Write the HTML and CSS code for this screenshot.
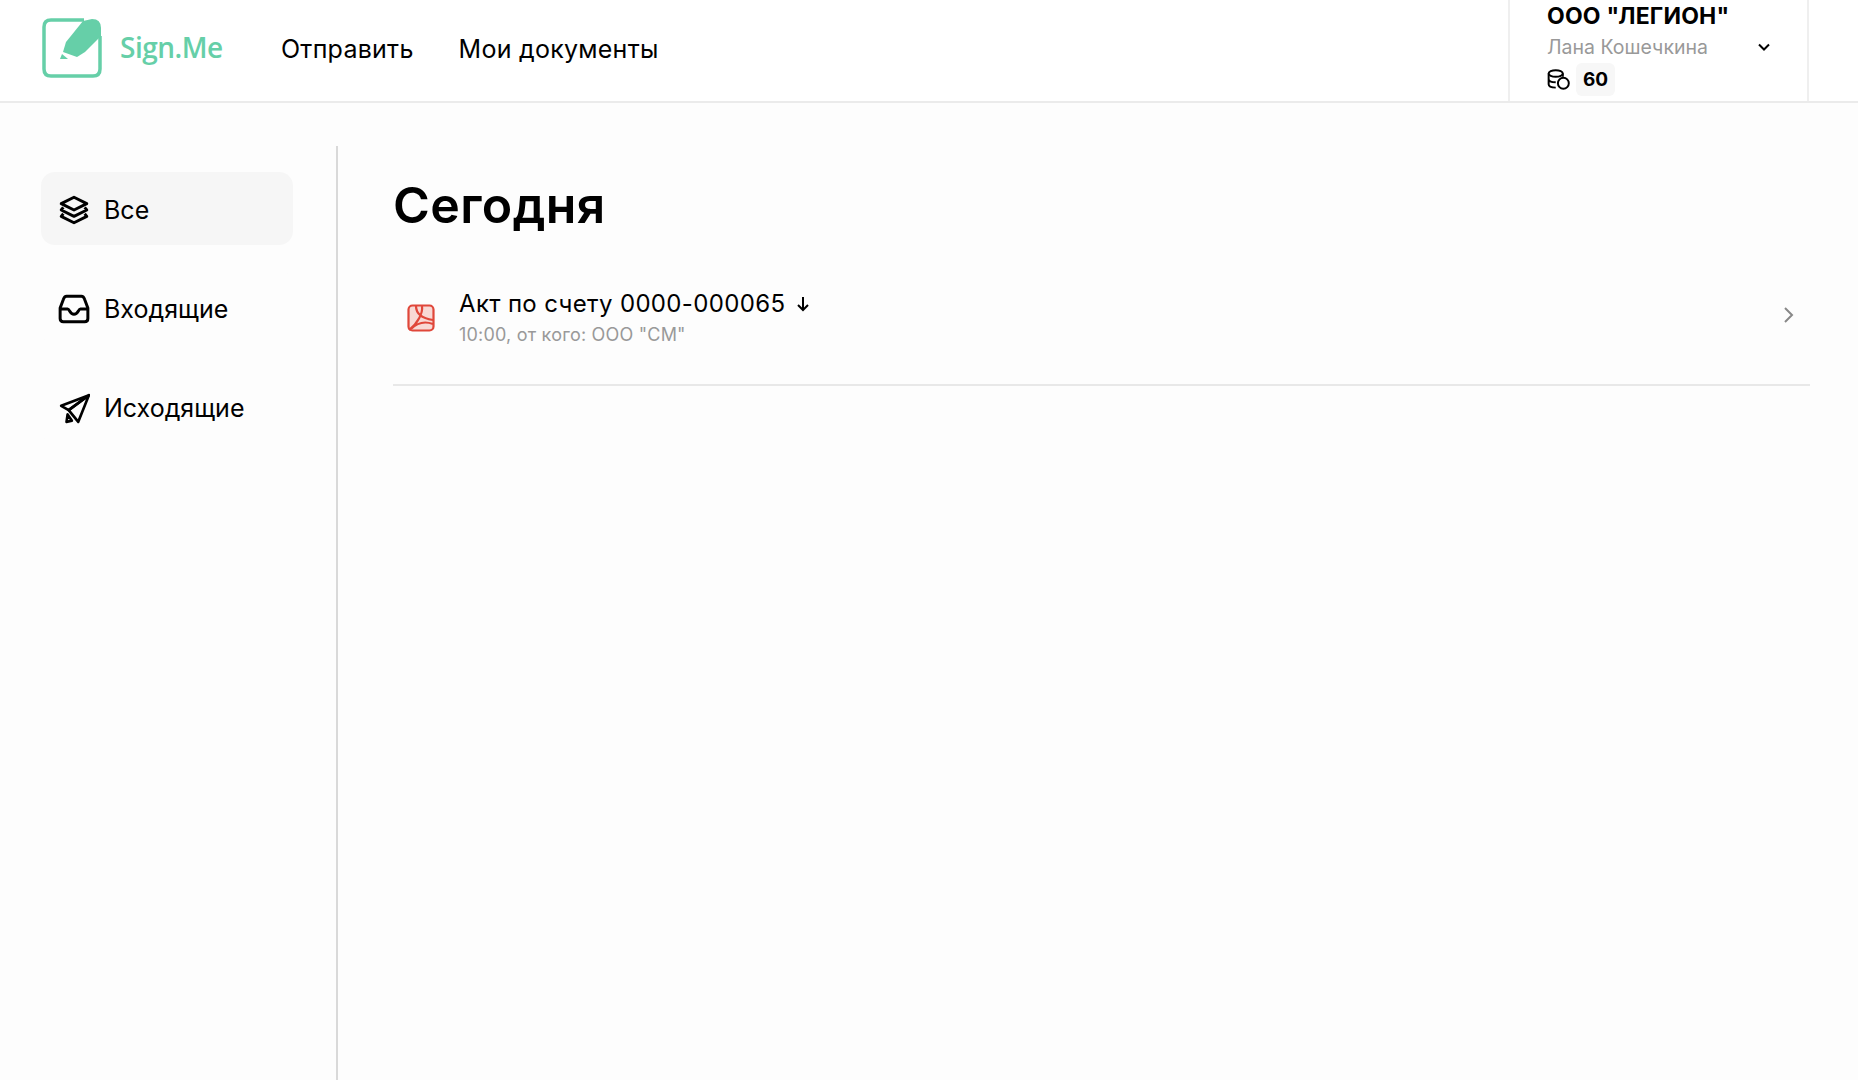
FILE: index.html
```html
<!DOCTYPE html>
<html lang="ru">
<head>
    <meta charset="UTF-8">
    <title>Sign.Me</title>
    <link rel="stylesheet" href="styles.css">
</head>
<body>
    <header class="header">
        <div class="logo">
            <svg class="logo-icon" width="60" height="60" viewBox="0 0 60 60">
                <path d="M42 2H9Q2 2 2 9V51Q2 58 9 58H51Q58 58 58 51V18" fill="none" stroke="#66cfa8" stroke-width="3.5"/>
                <path d="M41 3L50 1Q59 1 59 10V18L43 34L35 39L21 34L24 24Z" fill="#66cfa8"/>
                <path d="M20 36L26 41L18 41Z" fill="#66cfa8"/>
            </svg>
            <span class="logo-text">Sign.Me</span>
        </div>
        <nav class="nav">
            <a>Отправить</a>
            <a>Мои документы</a>
        </nav>
        <div class="account">
            <div class="company">ООО "ЛЕГИОН"</div>
            <div class="person">
                <span>Лана Кошечкина</span>
                <svg width="14" height="10" viewBox="0 0 14 10"><path d="M2 2.5L7 7.5L12 2.5" fill="none" stroke="#000" stroke-width="2"/></svg>
            </div>
            <div class="balance">
                <svg width="24" height="22" viewBox="0 0 22 20" fill="none" stroke="#000" stroke-width="1.8">
                    <ellipse cx="8" cy="4" rx="6.5" ry="3"/>
                    <path d="M1.5 4V14Q1.5 17 8 17M1.5 9Q1.5 12 8 12M14.5 4V7"/>
                    <circle cx="15" cy="13" r="5"/>
                </svg>
                <span class="coins">60</span>
            </div>
        </div>
    </header>

    <div class="page">
        <aside class="sidebar">
            <a class="side-item active">
                <svg width="32" height="32" viewBox="0 0 30 30" fill="none" stroke="#000" stroke-width="2.7" stroke-linejoin="round">
                    <path d="M15 3L27 9L15 15L3 9Z"/>
                    <path d="M5 12.5L3 15L15 21L27 15L25 12.5"/>
                    <path d="M5 18.5L3 21L15 27L27 21L25 18.5"/>
                </svg>
                Все
            </a>
            <a class="side-item">
                <svg width="32" height="32" viewBox="0 0 30 30" fill="none" stroke="#000" stroke-width="2.8" stroke-linejoin="round">
                    <path d="M8 3H22Q24 3 25 6L28 14V24Q28 27 25 27H5Q2 27 2 24V14L5 6Q6 3 8 3Z"/>
                    <path d="M2 15H9C11 15 11 20 15 20S19 15 21 15H28"/>
                </svg>
                Входящие
            </a>
            <a class="side-item">
                <svg width="32" height="32" viewBox="0 0 30 30" fill="none" stroke="#000" stroke-width="2.5" stroke-linejoin="round">
                    <path d="M29 3L3 13L10 17Z"/>
                    <path d="M29 3L10 17L19 28Z"/>
                    <path d="M9 21L8 28L13 27Z"/>
                </svg>
                Исходящие
            </a>
        </aside>

        <main class="content">
            <h1>Сегодня</h1>
            <div class="doc">
                <svg class="doc-icon" width="28" height="28" viewBox="0 0 28 28" fill="#f8d9d5" stroke="#e0473a" stroke-width="2.2">
                    <rect x="1.5" y="1.5" width="25" height="25" rx="4"/>
                    <path d="M9 2C9 9 13 14 26 16M15 2C16 9 11 19 2 26M4 25C10 19 18 17 26 20" fill="none"/>
                </svg>
                <div class="doc-info">
                    <div class="doc-title">
                        Акт по счету 0000-000065
                        <svg width="14" height="16" viewBox="0 0 14 16"><path d="M7 1V14M2 9L7 14L12 9" fill="none" stroke="#000" stroke-width="2"/></svg>
                    </div>
                    <div class="doc-sub">10:00, от кого: ООО "СМ"</div>
                </div>
                <svg class="doc-arrow" width="11" height="16" viewBox="0 0 11 16"><path d="M2 1L9 8L2 15" fill="none" stroke="#888" stroke-width="2"/></svg>
            </div>
        </main>
    </div>
</body>
</html>
```

FILE: styles.css
```css
*{
    box-sizing: border-box;
}
html, body{
    height: 100%;
}
body{
    margin: 0;
    background-color: #fdfdfd;
    color: #000;
    font-family: "Inter", "Liberation Sans", sans-serif;
    overflow: hidden;
}

.header{
    height: 103px;
    background-color: #fff;
    border-bottom: 2px solid #ebebeb;
    display: flex;
    align-items: center;
    padding-left: 42px;
}
.logo{
    display: flex;
    align-items: center;
    gap: 18px;
    width: 239px;
    margin-top: -5px;
}
.logo-text{
    font-family: "Open Sans", sans-serif;
    font-weight: 600;
    font-size: 28px;
    letter-spacing: -0.5px;
    color: #66cfa8;
    margin-bottom: 2px;
}
.nav{
    display: flex;
    gap: 45px;
    font-size: 25px;
    letter-spacing: 0.25px;
    margin-top: -3px;
}

.account{
    margin-left: auto;
    margin-right: 49px;
    width: 301px;
    height: 101px;
    border-left: 2px solid #efefef;
    border-right: 2px solid #efefef;
    padding-top: 1px;
    padding-left: 37px;
    padding-right: 36px;
}
.company{
    font-size: 23px;
    font-weight: 700;
    letter-spacing: 0.2px;
    line-height: 30px;
}
.person{
    display: flex;
    justify-content: space-between;
    align-items: center;
    font-size: 19.5px;
    color: #999;
    line-height: 24px;
    margin-top: 4px;
}
.balance{
    display: flex;
    align-items: center;
    gap: 5px;
    margin-top: 4px;
}
.coins{
    background-color: #f7f7f7;
    border-radius: 6px;
    padding: 0 7px;
    font-size: 19px;
    font-weight: 700;
    line-height: 33px;
}

.page{
    display: flex;
    height: calc(100% - 103px);
    padding-top: 43px;
}
.sidebar{
    width: 338px;
    padding: 26px 43px 0 41px;
    border-right: 2px solid #d9d9d9;
    display: flex;
    flex-direction: column;
    gap: 26px;
}
.side-item{
    height: 73px;
    border-radius: 14px;
    background-color: #fdfdfd;
    display: flex;
    align-items: center;
    gap: 14px;
    padding-left: 17px;
    padding-top: 2px;
    font-size: 25px;
}
.side-item.active{
    background-color: #f6f6f6;
}

.content{
    flex: 1;
    padding-left: 55px;
    padding-right: 48px;
}
h1{
    margin: 0;
    font-size: 50px;
    font-weight: 600;
    letter-spacing: 0.4px;
    line-height: 60px;
    padding-top: 29px;
}
.doc{
    display: flex;
    align-items: center;
    margin-top: 29px;
    height: 122px;
    border-bottom: 2px solid #e8e8e8;
    padding: 0 16px 10px 14px;
}
.doc-icon{
    margin-right: 24px;
    margin-top: -3px;
}
.doc-info{
    flex: 1;
    margin-bottom: 2px;
}
.doc-title{
    font-size: 24px;
    letter-spacing: 0.35px;
    line-height: 30px;
    display: flex;
    align-items: center;
    gap: 11px;
}
.doc-sub{
    font-size: 18px;
    letter-spacing: 0.2px;
    color: #999;
    line-height: 24px;
    margin-top: 4px;
}
.doc-arrow{
    margin-bottom: 8px;
}
```
